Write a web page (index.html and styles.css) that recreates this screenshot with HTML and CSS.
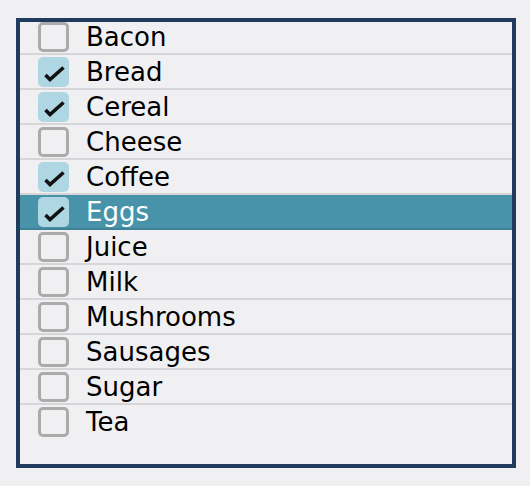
FILE: index.html
```html
<!DOCTYPE html>
<html>
<head>
<meta charset="utf-8">
<link rel="stylesheet" href="styles.css">
</head>
<body>
<div class="listbox">
  <ul class="list">
    <li class="item"><span class="box"></span><span class="label">Bacon</span></li>
    <li class="item"><span class="box checked"><svg viewBox="0 0 31 30" class="tick"><path d="M7.5 18 L12 22.5 L25.5 10.5"/></svg></span><span class="label">Bread</span></li>
    <li class="item"><span class="box checked"><svg viewBox="0 0 31 30" class="tick"><path d="M7.5 18 L12 22.5 L25.5 10.5"/></svg></span><span class="label">Cereal</span></li>
    <li class="item"><span class="box"></span><span class="label">Cheese</span></li>
    <li class="item"><span class="box checked"><svg viewBox="0 0 31 30" class="tick"><path d="M7.5 18 L12 22.5 L25.5 10.5"/></svg></span><span class="label">Coffee</span></li>
    <li class="item selected"><span class="box checked"><svg viewBox="0 0 31 30" class="tick"><path d="M7.5 18 L12 22.5 L25.5 10.5"/></svg></span><span class="label">Eggs</span></li>
    <li class="item"><span class="box"></span><span class="label">Juice</span></li>
    <li class="item"><span class="box"></span><span class="label">Milk</span></li>
    <li class="item"><span class="box"></span><span class="label">Mushrooms</span></li>
    <li class="item"><span class="box"></span><span class="label">Sausages</span></li>
    <li class="item"><span class="box"></span><span class="label">Sugar</span></li>
    <li class="item"><span class="box"></span><span class="label">Tea</span></li>
  </ul>
</div>
</body>
</html>
```
FILE: styles.css
```css
html, body {
  margin: 0;
  padding: 0;
  background: #f0f0f2;
}
body {
  padding: 18px 0 0 16px;
  font-family: "DejaVu Sans", Verdana, sans-serif;
}
.listbox {
  box-sizing: border-box;
  width: 500px;
  height: 450px;
  border: 4px solid #213b5d;
  background: #f0f0f2;
  overflow: hidden;
}
.list {
  list-style: none;
  margin: -2px 0 0 0;
  padding: 0;
}
.item {
  display: flex;
  align-items: center;
  height: 33px;
  border-bottom: 2px solid #d6d6d8;
  padding-left: 18px;
  font-size: 26px;
  color: #000;
}
.item:last-child {
  border-bottom: none;
}
.item.selected {
  background: #4893aa;
  border-bottom-color: #3f8195;
  color: #fff;
}
.box {
  box-sizing: border-box;
  width: 31px;
  height: 30px;
  border: 3px solid #ababab;
  border-radius: 5px;
  background: #f0f0f2;
  flex: none;
}
.box.checked {
  border: none;
  background: #aed6e3;
}
.tick {
  display: block;
  width: 31px;
  height: 30px;
}
.tick path {
  fill: none;
  stroke: #111;
  stroke-width: 3.6;
  stroke-linecap: butt;
  stroke-linejoin: miter;
}
.label {
  margin-left: 17px;
  line-height: 31px;
  padding-top: 2px;
}
```
